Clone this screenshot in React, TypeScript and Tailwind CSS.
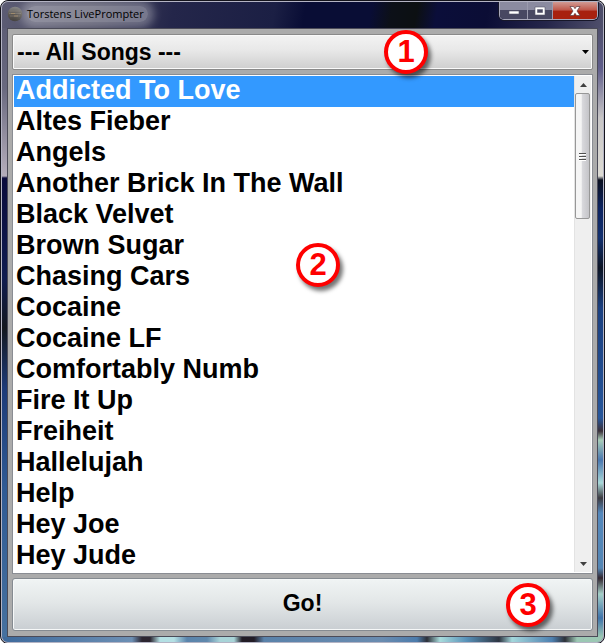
import React, { useState } from 'react';

const songs = [
  'Addicted To Love',
  'Altes Fieber',
  'Angels',
  'Another Brick In The Wall',
  'Black Velvet',
  'Brown Sugar',
  'Chasing Cars',
  'Cocaine',
  'Cocaine LF',
  'Comfortably Numb',
  'Fire It Up',
  'Freiheit',
  'Hallelujah',
  'Help',
  'Hey Joe',
  'Hey Jude',
];

// Numbered callout, drawn over the control it explains
function Marker({ label, className }: { label: string; className: string }) {
  return (
    <span
      className={`pointer-events-none absolute z-10 flex size-11 items-center justify-center rounded-full border-4 border-[#fe0000] bg-white pb-0.5 text-[31px] leading-none font-bold text-[#fe0000] shadow-[3px_4px_4px_rgba(0,0,0,0.55)] ${className}`}
    >
      {label}
    </span>
  );
}

function AppIcon() {
  return (
    <svg viewBox="0 0 16 16" className="size-4" aria-hidden="true">
      <defs>
        <linearGradient id="ball" x1="0" y1="0" x2="0" y2="1">
          <stop offset="0" stopColor="#858585" />
          <stop offset="0.5" stopColor="#5e5a55" />
          <stop offset="1" stopColor="#45423f" />
        </linearGradient>
      </defs>
      <circle cx="8" cy="8" r="7.3" fill="url(#ball)" />
      <path d="M3 5h10M2 7.500h12M3 10h10" stroke="#8a857d" strokeWidth="0.6" />
      <path d="M4 7.500h4M7 10h4" stroke="#a8906c" strokeWidth="0.8" />
    </svg>
  );
}

function TitleBar() {
  return (
    <header className="flex h-[26px] items-start justify-between bg-[linear-gradient(100deg,#5c5c74_0,#45455c_90px,#24264a_170px,#1b1f44_270px,#090d35_300px,#090d35_365px,#0c1018_385px,#0c1012_410px,#0b0e3a_430px,#0b0d35_480px,#25264a_540px,#50506c_100%)] pr-[5px] pl-[5px]">
      <div className="flex items-center pt-1">
        <AppIcon />
        <h1 className="ml-1 rounded-full bg-white/35 pr-1 font-['Open_Sans',sans-serif] text-[11px] leading-4 text-black shadow-[0_0_8px_6px_rgba(255,255,255,0.3)]">
          Torstens LivePrompter
        </h1>
      </div>
      <div className="flex h-[18px] overflow-hidden rounded-b-[5px] border border-t-0 border-[#a9a9bb] shadow-[0_0_0_1px_#171729]">
        <button
          aria-label="Minimize"
          className="flex w-7 items-center justify-center border-r border-[#9b9bae] bg-linear-to-b from-[#8b8ba0] from-45% to-[#484862] to-50%"
        >
          <svg viewBox="0 0 12 10" className="h-[10px] w-3">
            <rect x="1" y="5" width="10" height="3" fill="#fff" stroke="#555568" strokeWidth="0.6" />
          </svg>
        </button>
        <button
          aria-label="Maximize"
          className="flex w-[25px] items-center justify-center border-r border-[#9b9bae] bg-linear-to-b from-[#8b8ba0] from-45% to-[#484862] to-50%"
        >
          <svg viewBox="0 0 12 10" className="h-[10px] w-3">
            <path d="M1 1h10v8H1zM3.500 3.500v3h5v-3z" fill="#fff" fillRule="evenodd" stroke="#555568" strokeWidth="0.6" />
          </svg>
        </button>
        <button
          aria-label="Close"
          className="flex w-11 items-center justify-center bg-linear-to-b from-[#d09a94] from-0% via-[#c05a4e] via-45% to-[#a8210f] to-55%"
        >
          <svg viewBox="0 0 12 10" className="h-[10px] w-3">
            <path
              d="M1 0.500h3.500L6 2.700 7.500 0.500H11L8 5l3 4.500H7.500L6 7.300 4.500 9.500H1L4 5z"
              fill="#fff"
              stroke="#5a3a40"
              strokeWidth="0.7"
            />
          </svg>
        </button>
      </div>
    </header>
  );
}

function ScrollBar() {
  return (
    <div className="flex w-[17px] shrink-0 flex-col border-l border-[#e3e3e3] bg-[#efefef]">
      <button aria-label="Scroll up" className="flex h-[17px] items-center justify-center">
        <svg viewBox="0 0 7 4" className="h-1 w-[7px]">
          <path d="M0 4 3.500 0 7 4z" fill="#404040" />
        </svg>
      </button>
      <div className="mr-px flex h-[126px] items-center justify-center rounded-xs border border-[#979797] bg-linear-to-r from-[#f5f5f5] from-40% via-[#d8d8dc] via-50% to-[#c4c4c8]">
        <svg viewBox="0 0 7 9" className="h-[9px] w-[7px]">
          <path d="M0 1.500h7M0 4.500h7M0 7.500h7" stroke="#505050" />
          <path d="M0 2.500h7M0 5.500h7M0 8.500h7" stroke="#fff" />
        </svg>
      </div>
      <div className="flex-1" />
      <button aria-label="Scroll down" className="flex h-[17px] items-center justify-center">
        <svg viewBox="0 0 7 4" className="h-1 w-[7px]">
          <path d="M0 0h7L3.500 4z" fill="#404040" />
        </svg>
      </button>
    </div>
  );
}

export default function App() {
  const [selected, setSelected] = useState(songs[0]);

  return (
    <div className="flex min-h-screen flex-col overflow-hidden rounded-lg border border-[#14141c] bg-[#8c8c9c] font-['Liberation_Sans',Arial,sans-serif] text-black">
      <div className="flex flex-1 flex-col overflow-hidden rounded-[7px] border border-[#b4b4c4]">
        <TitleBar />

        <div className="flex flex-1">
          <div className="w-[5px] bg-[linear-gradient(#5d5d75_0,#69697f_60px,#b5aebb_148px,#0a0b3c_150px,#101c50_250px,#14181f_300px,#1d3a78_360px,#2f5a94_460px,#46719f_100%)]" />

          <main className="flex flex-1 flex-col border border-[#4b4b58] bg-[#ababab] px-1 py-[5px]">
            <div className="relative">
              <select
                aria-label="Playlist"
                className="block h-9 w-full appearance-none rounded-xs border border-[#8a8a8a] bg-linear-to-b from-[#f3f3f3] from-0% via-[#e8e8e8] via-45% to-[#cecece] px-1 text-[23px] leading-8 font-bold shadow-[inset_0_0_0_1px_#fafafa]"
              >
                <option>--- All Songs ---</option>
              </select>
              <svg viewBox="0 0 7 4" className="pointer-events-none absolute top-4 right-1 h-1 w-[7px]">
                <path d="M0 0h7L3.500 4z" fill="#000" />
              </svg>
              <Marker label="1" className="-top-1 right-[165px]" />
            </div>

            <div className="relative mt-1 flex flex-1 border border-[#8a8d93] bg-white p-px">
              <ul className="flex-1">
                {songs.map((song) => (
                  <li key={song}>
                    <button
                      onClick={() => setSelected(song)}
                      className={`block h-[31px] w-full px-0.5 pb-[3px] text-left text-[27px] leading-7 font-bold ${
                        song === selected ? 'bg-[#3399ff] text-white' : ''
                      }`}
                    >
                      {song}
                    </button>
                  </li>
                ))}
              </ul>
              <ScrollBar />
              <Marker label="2" className="top-[168px] left-[283px]" />
            </div>

            <div className="relative mt-1">
              <button className="block h-[53px] w-full rounded-[3px] border border-[#858b91] bg-linear-to-b from-[#f0f4f4] from-0% via-[#e3e7e8] via-45% to-[#c9ced2] pb-0.5 text-[23px] font-bold shadow-[inset_0_0_0_1px_#f6f8f8]">
                Go!
              </button>
              <Marker label="3" className="top-[5px] right-[43px]" />
            </div>
          </main>

          <div className="w-[5px] bg-[linear-gradient(#50506c_0,#5f5d8a_40px,#c8c6c6_90px,#dddbd4_148px,#0b1020_152px,#0c2360_180px,#12306e_210px,#0c1424_240px,#1b4080_280px,#27569a_390px,#3a2f38_403px,#a8cdb8_412px,#4a78b0_432px,#a8d8d8_455px,#3b3a40_470px,#5488bc_485px,#5486b4_540px,#32262f_550px,#a5d0c8_566px,#3f73aa_590px,#9cc8b4_100%)]" />
        </div>

        <div className="h-[5px] bg-[linear-gradient(90deg,#3e6a9c_0,#6c8fb4_130px,#2c2530_140px,#2c2530_148px,#b4e0e4_158px,#b4e0e4_172px,#5a84ac_185px,#6088ac_205px,#a8d4d8_218px,#a8d4d8_232px,#221c26_240px,#221c26_252px,#5a82aa_262px,#6a8cb0_380px,#4c7cac_415px,#2d3038_425px,#a8dcdc_438px,#5690b8_465px,#2d3440_497px,#a4d8dc_510px,#4d80b0_550px,#2d3038_563px,#9cc8b4_575px,#9cc8b4_100%)]" />
      </div>
    </div>
  );
}
